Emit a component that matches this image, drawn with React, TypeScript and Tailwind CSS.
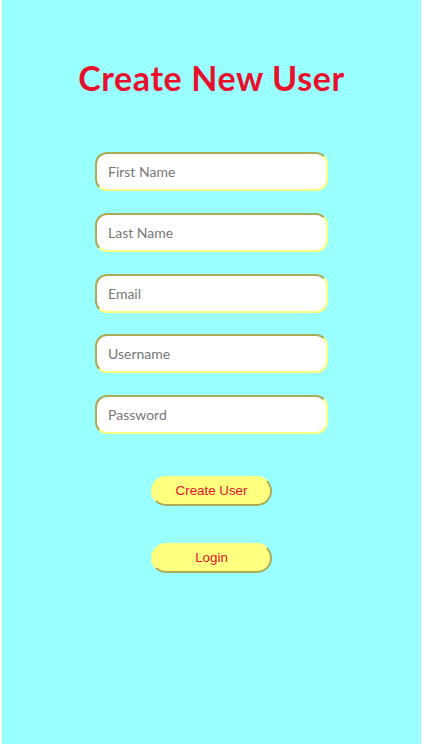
import React from 'react';

const fields = ['First Name', 'Last Name', 'Email', 'Username', 'Password'];

export default function App() {
  return (
    <div className="min-h-screen bg-white">
      <div className="min-h-screen ml-[2px] mr-px bg-[#99ffff] flex flex-col items-center">
        <h1 className="mt-[57px] text-[34px] leading-[42px] font-bold text-[#e8112d] font-['Lato',sans-serif] tracking-[0.6px]">
          Create New User
        </h1>

        <form className="mt-[53px] flex flex-col items-center">
          <div className="flex flex-col gap-[21.75px]">
            {fields.map((f) => (
              <input
                key={f}
                type={f === 'Password' ? 'password' : 'text'}
                placeholder={f}
                className="w-[233px] h-[39px] rounded-[12px] border-2 [border-style:inset] border-[#ffff80] bg-white px-[11px] text-[14px] font-['Lato',sans-serif] text-[#555] placeholder:text-[#777] outline-none"
              />
            ))}
          </div>

          <button
            type="button"
            className="mt-[42px] w-[121px] h-[30px] rounded-[15px] border-2 [border-style:outset] border-[#ffff80] bg-[#ffff80] text-[13.333px] text-[#e8112d] font-['Liberation_Sans',Arial,sans-serif]"
          >
            Create User
          </button>
          <button
            type="button"
            className="mt-[37px] w-[121px] h-[30px] rounded-[15px] border-2 [border-style:outset] border-[#ffff80] bg-[#ffff80] text-[13.333px] text-[#e8112d] font-['Liberation_Sans',Arial,sans-serif]"
          >
            Login
          </button>
        </form>
      </div>
    </div>
  );
}
